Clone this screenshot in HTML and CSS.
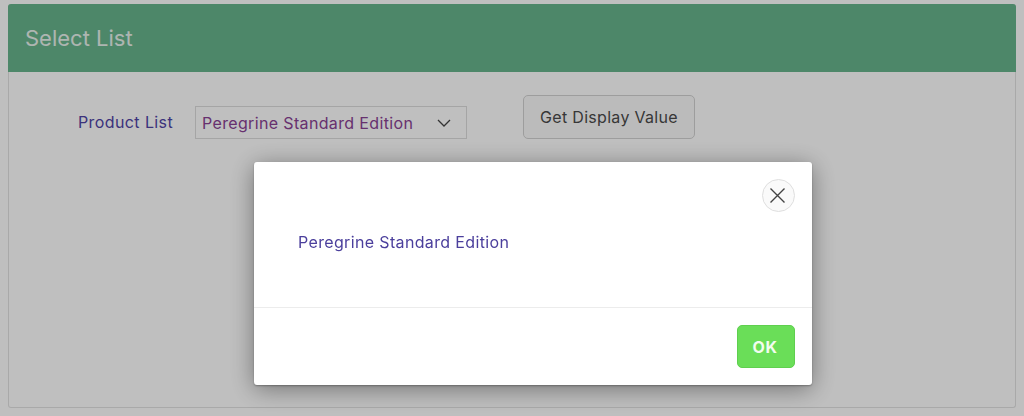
FILE: index.html
```html
<!DOCTYPE html>
<html lang="en">
<head>
    <meta charset="UTF-8">
    <title>Select List</title>
    <link rel="stylesheet" href="styles.css">
</head>
<body>
<section class="card">
    <header class="card-head">Select List</header>
    <div class="card-body">
        <span class="field-label">Product List</span>
        <div class="select">
            <span>Peregrine Standard Edition</span>
            <svg width="14" height="8" viewBox="0 0 14 8" fill="none" stroke="#444" stroke-width="1.3"><path d="M1 1l6 6 6-6"/></svg>
        </div>
        <button class="display-btn" type="button">Get Display Value</button>
    </div>
</section>

<div class="backdrop">
    <div class="modal">
        <div class="modal-body">
            <button class="close" type="button" aria-label="Close">
                <svg width="17" height="17" viewBox="0 0 17 17" fill="none" stroke="#444" stroke-width="1.4"><path d="M1.5 1.5l14 14M15.5 1.5l-14 14"/></svg>
            </button>
            <p>Peregrine Standard Edition</p>
        </div>
        <div class="modal-foot">
            <button class="ok" type="button">OK</button>
        </div>
    </div>
</div>
</body>
</html>
```

FILE: styles.css
```css
*{
    box-sizing: border-box;
    margin: 0;
    padding: 0;
    font-family: Inter, "Noto Sans", sans-serif;
}

body{
    width: 1024px;
    height: 416px;
    padding: 4px 8px 8px;
    background: #fff;
    overflow: hidden;
}

.card{
    height: 404px;
    border: 1px solid #e2e2e2;
    border-top: none;
    border-radius: 3px;
}
.card-head{
    height: 68px;
    margin: 0 -1px;
    padding-left: 17px;
    border-radius: 3px 3px 0 0;
    background: #67b48c;
    color: #e8f2ed;
    font-size: 22px;
    line-height: 68px;
}
.card-body{
    display: flex;
    align-items: flex-end;
    padding: 23px 0 0 69px;
}
.field-label{
    width: 117px;
    padding-bottom: 7px;
    color: #4f44a6;
    font-size: 16px;
    line-height: 20px;
    letter-spacing: .4px;
}
.select{
    display: flex;
    align-items: center;
    justify-content: space-between;
    width: 272px;
    height: 33px;
    padding: 0 15px 0 6px;
    border: 1px solid #dcdcdc;
    color: #8a4294;
    font-size: 16px;
    letter-spacing: .35px;
}
.display-btn{
    width: 172px;
    height: 44px;
    margin-left: 56px;
    border: 1px solid #d2d2d2;
    border-radius: 5px;
    background: #fafafa;
    color: #4a4a4a;
    font-size: 16px;
    letter-spacing: .3px;
}

/* overlay that dims the page under the dialog */
.backdrop{
    position: fixed;
    top: 0;
    left: 0;
    width: 100%;
    height: 100%;
    background: rgba(0, 0, 0, .25);
}
.modal{
    position: absolute;
    top: 162px;
    left: 254px;
    width: 558px;
    height: 223px;
    border-radius: 3px;
    background: #fff;
    box-shadow: 0 1px 2px rgba(0, 0, 0, .3), 0 4px 24px rgba(0, 0, 0, .4);
}
.modal-body{
    position: relative;
    height: 146px;
    padding: 70px 44px 0;
    border-bottom: 1px solid #ececec;
}
.modal-body p{
    color: #4b3f9c;
    font-size: 16px;
    line-height: 20px;
    letter-spacing: .35px;
}
.close{
    position: absolute;
    top: 17px;
    right: 17px;
    display: flex;
    align-items: center;
    justify-content: center;
    width: 33px;
    height: 33px;
    padding-right: 2px;
    border: 1px solid #dedede;
    border-radius: 50%;
    background: #fafafa;
}
.modal-foot{
    display: flex;
    justify-content: flex-end;
    padding: 17px 17px 0;
}
.ok{
    width: 58px;
    height: 43px;
    padding-right: 2px;
    border: 1px solid #5fcf4f;
    border-radius: 5px;
    background: #6ade58;
    color: #f2fcef;
    font-size: 16px;
    font-weight: 700;
    letter-spacing: .5px;
}
```
